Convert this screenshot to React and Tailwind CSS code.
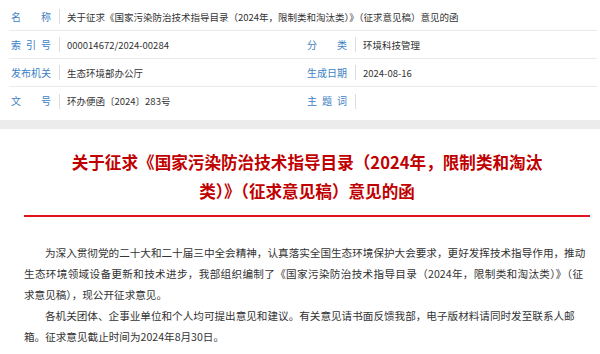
import React from "react";

const FONT = { fontFamily: '"Noto Sans CJK SC", "Noto Sans", "Liberation Sans", sans-serif' };

function Label({ text }) {
  return (
    <div className="flex w-[40px] justify-between text-[10px] leading-[14px] text-[#3d7fc4]">
      {text.split("").map((c, i) => (
        <span key={i}>{c}</span>
      ))}
    </div>
  );
}

function Cell({ label, value, className = "" }) {
  return (
    <div className={"flex items-center " + className}>
      <Label text={label} />
      <div className="ml-[8px] h-[15px] w-px bg-[#dcdcdc]" />
      <div className="ml-[7px] whitespace-nowrap text-[9.5px] leading-[14px] text-[#333]">{value}</div>
    </div>
  );
}

export default function App() {
  return (
    <div className="h-[354px] w-[600px] overflow-hidden bg-white" style={FONT}>
      <div className="pl-[9px] pr-[3px] pt-[3px]">
        <div className="flex h-[28px] items-center border-b border-[#ebebeb] pl-[2px]">
          <Cell
            label="名称"
            value="关于征求《国家污染防治技术指导目录（2024年，限制类和淘汰类）》（征求意见稿）意见的函"
          />
        </div>
        <div className="flex h-[28px] items-center border-b border-[#ebebeb]">
          <Cell className="w-[289px] pl-[2px]" label="索引号" value="000014672/2024-00284" />
          <Cell className="flex-1 pl-[9px]" label="分类" value="环境科技管理" />
        </div>
        <div className="flex h-[28px] items-center border-b border-[#ebebeb]">
          <Cell className="w-[289px] pl-[2px]" label="发布机关" value="生态环境部办公厅" />
          <Cell className="flex-1 pl-[9px]" label="生成日期" value="2024-08-16" />
        </div>
        <div className="flex h-[28px] items-center">
          <Cell className="w-[289px] pl-[2px]" label="文号" value="环办便函〔2024〕283号" />
          <Cell className="flex-1 pl-[9px]" label="主题词" value="" />
        </div>
      </div>

      <div className="mt-[5px] h-[9px] bg-[#ececec]" />

      <div className="pl-[24px] pr-[10px]">
        <h1 className="mt-[19px] text-center text-[16.6px] font-bold leading-[29px] text-[#c00000]">
          <div className="whitespace-nowrap">关于征求《国家污染防治技术指导目录（2024年，限制类和淘汰</div>
          <div className="whitespace-nowrap">类）》（征求意见稿）意见的函</div>
        </h1>
        <div className="mt-[9px] h-[2px] bg-[#e0141e]" />
        <div className="mt-[25px] text-[10.6px] leading-[21px] text-[#333]">
          <div className="whitespace-nowrap pl-[21px]">
            为深入贯彻党的二十大和二十届三中全会精神，认真落实全国生态环境保护大会要求，更好发挥技术指导作用，推动
          </div>
          <div className="w-[559px] whitespace-nowrap text-justify [text-align-last:justify]">
            生态环境领域设备更新和技术进步，我部组织编制了《国家污染防治技术指导目录（2024年，限制类和淘汰类）》（征
          </div>
          <div className="whitespace-nowrap">求意见稿），现公开征求意见。</div>
          <div className="whitespace-nowrap pl-[21px]">
            各机关团体、企事业单位和个人均可提出意见和建议。有关意见请书面反馈我部，电子版材料请同时发至联系人邮
          </div>
          <div className="whitespace-nowrap">箱。征求意见截止时间为2024年8月30日。</div>
        </div>
      </div>
    </div>
  );
}
